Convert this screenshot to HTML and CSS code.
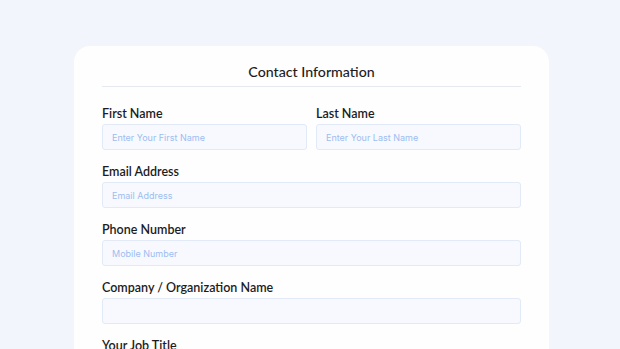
FILE: index.html
```html
<!DOCTYPE html>
<html lang="en">
<head>
    <meta charset="UTF-8">
    <meta name="viewport" content="width=device-width, initial-scale=1.0">
    <title>Contact Information</title>
    <link rel="stylesheet" href="styles.css">
</head>
<body>
    <div class="form-card">
        <h2 class="form-title">Contact Information</h2>
        <div class="form-row">
            <div class="field">
                <label for="firstName">First Name</label>
                <input type="text" id="firstName" placeholder="Enter Your First Name">
            </div>
            <div class="field">
                <label for="lastName">Last Name</label>
                <input type="text" id="lastName" placeholder="Enter Your Last Name">
            </div>
        </div>
        <div class="field">
            <label for="email">Email Address</label>
            <input type="email" id="email" placeholder="Email Address">
        </div>
        <div class="field">
            <label for="phone">Phone Number</label>
            <input type="tel" id="phone" placeholder="Mobile Number">
        </div>
        <div class="field">
            <label for="company">Company / Organization Name</label>
            <input type="text" id="company">
        </div>
        <div class="field">
            <label for="jobTitle">Your Job Title</label>
            <input type="text" id="jobTitle">
        </div>
    </div>
</body>
</html>
```

FILE: styles.css
```css
body {
    margin: 0;
    padding-top: 46px;
    background-color: #f2f5fc;
    font-family: Lato, "Open Sans", sans-serif;
    color: #1c1c1c;
    overflow: hidden;
}
.form-card {
    width: 419px;
    margin-left: 74px;
    padding: 16px 28px 0;
    background-color: #fefefe;
    border-radius: 16px;
    min-height: 400px;
}
.form-title {
    margin: 0;
    font-size: 14.2px;
    font-weight: 500;
    line-height: 20px;
    text-align: center;
    padding-bottom: 4px;
    border-bottom: 1px solid #e6e9ef;
    margin-bottom: 19px;
}
.form-row {
    display: flex;
    gap: 9px;
}
.form-row .field {
    flex: 1;
}
.field {
    display: flex;
    flex-direction: column;
    margin-bottom: 14px;
}
.field label {
    font-size: 12.5px;
    font-weight: 600;
    line-height: 16px;
    margin-bottom: 2px;
}
.field input {
    height: 26px;
    box-sizing: border-box;
    border: 1px solid #e2e9f7;
    border-radius: 3px;
    background-color: #f7f9fe;
    padding: 0 9px;
    font-family: Inter, sans-serif;
    font-size: 9px;
    color: #333;
}
.field input::placeholder {
    color: #9dbdf0;
}
```
